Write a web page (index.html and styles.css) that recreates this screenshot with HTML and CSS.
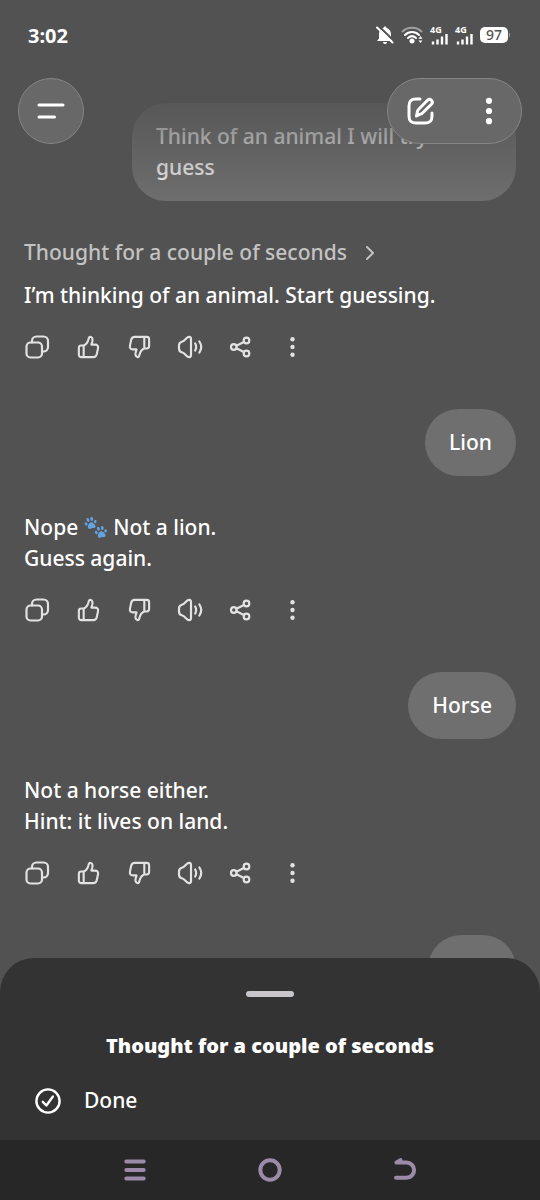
FILE: index.html
```html
<!DOCTYPE html>
<html lang="en">
<head>
<meta charset="utf-8">
<meta name="viewport" content="width=device-width, initial-scale=1">
<title>Chat</title>
<link rel="stylesheet" href="styles.css">
</head>
<body>
<svg class="defs" aria-hidden="true">
  <symbol id="copy" viewBox="0 0 26 26"><rect x="2.500" y="8.500" width="15.500" height="15" rx="4"/><path d="M8 8.500V7a4.500 4.500 0 0 1 4.500-4.500h7A4.500 4.500 0 0 1 24 7v6a4.500 4.500 0 0 1-4.500 4.500H18"/></symbol>
  <symbol id="up" viewBox="-0.500 -0.500 27 27"><path d="M8.500 23.500H6a2.500 2.500 0 0 1-2.500-2.500v-7A2.500 2.500 0 0 1 6 11.500h2.500zM8.500 11.500c2.700-1 4.200-3.200 5-6.500.4-1.900 1.100-2.700 2.300-2.400 2 .5 2.200 2.600 1.600 4.900L16.500 10.500h3.800c2.400 0 3.600 1.500 3.100 3.700l-1.300 6.300c-.5 2.100-1.600 3-3.600 3h-10"/></symbol>
  <symbol id="down" viewBox="-1.500 -0.500 27 27"><path d="M17.500 2.500H20A2.500 2.500 0 0 1 22.500 5v7a2.500 2.500 0 0 1-2.500 2.500h-2.500zM17.500 14.500c-2.700 1-4.200 3.200-5 6.500-.4 1.900-1.100 2.700-2.300 2.400-2-.5-2.200-2.600-1.600-4.900l.9-3H5.700c-2.400 0-3.600-1.500-3.100-3.700l1.300-6.300c.5-2.100 1.600-3 3.600-3h10"/></symbol>
  <symbol id="sound" viewBox="0 0 26 26"><path d="M2 11.500c0-2.400.8-3.300 2.800-3.800 2-.5 3-1.800 4.400-3.300C11.300 2.200 14 2.300 14 5v16c0 2.700-2.700 2.800-4.800.6-1.400-1.500-2.400-2.800-4.400-3.300C2.800 17.800 2 16.900 2 14.500zM18.200 9.500c1.200 2.300 1.200 4.800 0 7M22.400 7.500c2.400 3.700 2.400 7.500 0 11"/></symbol>
  <symbol id="share" viewBox="0 0 26 26"><circle cx="5.800" cy="13" r="2.800"/><circle cx="18.500" cy="6.500" r="2.800"/><circle cx="18.500" cy="19.500" r="2.800"/><path d="m8.400 11.700 7.500-3.800M8.400 14.300l7.500 3.800"/></symbol>
  <symbol id="more" viewBox="0 0 26 26"><g fill="currentColor" stroke="none"><circle cx="13.500" cy="5.200" r="2.200"/><circle cx="13.500" cy="13" r="2.200"/><circle cx="13.500" cy="20.800" r="2.200"/></g></symbol>
  <symbol id="bars" viewBox="0 0 18 12"><path d="M3 11.500V8.500M7.500 11.500V6.500M12 11.500V3.500M16.500 11.500V1" stroke-width="2.400" stroke-linecap="butt"/></symbol>
  <symbol id="pad" viewBox="0 0 14 13"><ellipse cx="1.900" cy="6.200" rx="1.400" ry="1.900" transform="rotate(-25 1.900 6.200)"/><ellipse cx="4.900" cy="2.500" rx="1.500" ry="2.200" transform="rotate(-8 4.900 2.500)"/><ellipse cx="9.100" cy="2.500" rx="1.500" ry="2.200" transform="rotate(8 9.100 2.500)"/><ellipse cx="12.100" cy="6.200" rx="1.400" ry="1.900" transform="rotate(25 12.100 6.200)"/><path d="M7 5.800c2 0 4.200 3.200 4.200 5 0 1.900-2.200 2-4.200 1.300-2 .7-4.200.6-4.200-1.300 0-1.800 2.200-5 4.200-5z"/></symbol>
</svg>

<div class="app">
  <main class="chat">
    <p class="bubble">Think of an animal I will try to guess</p>

    <section class="reply">
      <button class="thought" type="button">Thought for a couple of seconds
        <svg class="chevron" viewBox="0 0 10 16" aria-hidden="true"><path d="m2 2 6 6-6 6"/></svg>
      </button>
      <p>I’m thinking of an animal. Start guessing.</p>
      <div class="actions">
        <button type="button" aria-label="Copy"><svg><use href="#copy"/></svg></button>
        <button type="button" aria-label="Good response"><svg><use href="#up"/></svg></button>
        <button type="button" aria-label="Bad response"><svg><use href="#down"/></svg></button>
        <button type="button" aria-label="Read aloud"><svg><use href="#sound"/></svg></button>
        <button type="button" aria-label="Share"><svg><use href="#share"/></svg></button>
        <button type="button" aria-label="More"><svg><use href="#more"/></svg></button>
      </div>
    </section>

    <p class="bubble">Lion</p>

    <section class="reply">
      <p>Nope <svg class="paws" viewBox="0 0 24 22" role="img" aria-label="Paw prints"><use href="#pad" x="0" y="0" width="14" height="12" transform="rotate(-14 7 7)"/><use href="#pad" x="10" y="9" width="14" height="12" transform="rotate(-10 17 15)"/></svg> Not a lion.<br>Guess again.</p>
      <div class="actions">
        <button type="button" aria-label="Copy"><svg><use href="#copy"/></svg></button>
        <button type="button" aria-label="Good response"><svg><use href="#up"/></svg></button>
        <button type="button" aria-label="Bad response"><svg><use href="#down"/></svg></button>
        <button type="button" aria-label="Read aloud"><svg><use href="#sound"/></svg></button>
        <button type="button" aria-label="Share"><svg><use href="#share"/></svg></button>
        <button type="button" aria-label="More"><svg><use href="#more"/></svg></button>
      </div>
    </section>

    <p class="bubble">Horse</p>

    <section class="reply">
      <p>Not a horse either.<br>Hint: it lives on land.</p>
      <div class="actions">
        <button type="button" aria-label="Copy"><svg><use href="#copy"/></svg></button>
        <button type="button" aria-label="Good response"><svg><use href="#up"/></svg></button>
        <button type="button" aria-label="Bad response"><svg><use href="#down"/></svg></button>
        <button type="button" aria-label="Read aloud"><svg><use href="#sound"/></svg></button>
        <button type="button" aria-label="Share"><svg><use href="#share"/></svg></button>
        <button type="button" aria-label="More"><svg><use href="#more"/></svg></button>
      </div>
    </section>

    <div class="bubble next"></div>
  </main>

  <header class="top">
    <div class="status">
      <time>3:02</time>
      <div class="indicators">
        <svg class="bell" viewBox="0 0 18 20" aria-hidden="true"><path class="solid" d="M9 1.500c.9 0 1.500.6 1.500 1.400C13.300 3.700 15 6 15 9v4.500l2 2.500H1l2-2.500V9c0-3 1.700-5.300 4.500-6.100 0-.8.6-1.400 1.500-1.400zM7 17h4a2 2 0 0 1-4 0z"/><path class="gap" d="M2.500 1 18 16"/><path d="m1 2.500 15.500 15"/></svg>
        <svg class="wifi" viewBox="0 0 22 18" aria-hidden="true"><path class="dim" d="M1.500 5.500c5-5 14-5 19 0"/><path d="M4 9c4-4 10-4 14 0M7 12c2.500-2.300 5.500-2.300 8 0"/><circle class="solid" cx="11" cy="15" r="2.500"/><path class="solid" d="m19.500 10 2 2.800h-4zM19.500 17l2-2.600h-4z"/></svg>
        <span class="signal">4G<svg><use href="#bars"/></svg></span>
        <span class="signal">4G<svg><use href="#bars"/></svg></span>
        <span class="battery">97</span>
      </div>
    </div>
    <nav class="toolbar">
      <button class="menu" type="button" aria-label="Menu"><svg viewBox="0 0 28 18"><path d="M2 3h24M2 15h15.500"/></svg></button>
      <div class="pill">
        <button type="button" aria-label="New chat"><svg viewBox="0 0 28 28"><path d="M13 2H9C4 2 2 4 2 9v10c0 5 2 7 7 7h9c5 0 7-2 7-7v-3M9.500 19l1-4.700c.2-.9.600-1.500 1.200-2.100l8.800-8.900c1.300-1.300 2.700-1.300 3.900-.1 1.200 1.200 1.200 2.700 0 4L15.500 16c-.6.600-1.200.9-2.100 1.200z"/></svg></button>
        <button type="button" aria-label="Options"><svg class="dots" viewBox="0 0 28 28"><circle cx="15" cy="3.800" r="3.100"/><circle cx="15" cy="14" r="3.100"/><circle cx="15" cy="24.200" r="3.100"/></svg></button>
      </div>
    </nav>
  </header>

  <footer class="bottom">
    <section class="sheet">
      <div class="handle"></div>
      <h2>Thought for a couple of seconds</h2>
      <p class="step"><svg viewBox="0 0 28 28" aria-hidden="true"><circle cx="14" cy="14" r="11.600"/><path d="m8.800 14.800 3.600 3.700 6.500-9"/></svg>Done</p>
    </section>
    <nav class="system">
      <button type="button" aria-label="Recent apps"><svg viewBox="0 0 24 24"><path d="M3.300 3.500h17.400M3.300 12h17.400M3.300 20.500h17.400"/></svg></button>
      <button type="button" aria-label="Home"><svg viewBox="0 0 24 24"><circle cx="12" cy="12" r="9.700"/></svg></button>
      <button type="button" aria-label="Back"><svg viewBox="0 0 24 24"><path d="M3.500 4.500H13.500a7.600 7.600 0 0 1 0 15.200H3M3.500 4.500 7.500 2.200v2"/></svg></button>
    </nav>
  </footer>
</div>
</body>
</html>
```

FILE: styles.css
```css
* { box-sizing: border-box; }

body {
  margin: 0;
  background: #525252;
  color: #fff;
  font-family: "Noto Sans", "Open Sans", sans-serif;
  font-size: 21px;
  font-weight: 500;
  line-height: 31px;
}

p, h2 { margin: 0; }

button {
  display: flex;
  align-items: center;
  justify-content: center;
  padding: 0;
  border: 0;
  background: none;
  color: inherit;
  font: inherit;
}

svg {
  display: block;
  fill: none;
  stroke: currentColor;
  stroke-width: 2;
  stroke-linecap: round;
  stroke-linejoin: round;
}

.defs { display: none; }

.app {
  position: relative;
  height: 100vh;
  overflow: hidden;
}

/* Conversation */
.chat {
  display: flex;
  flex-direction: column;
  padding: 103px 24px 0;
}

.bubble {
  align-self: flex-end;
  max-width: 384px;
  padding: 18px 24px;
  border-radius: 34px;
  background: #6f6f6f;
}

.next { width: 88px; height: 67px; }

.reply { padding: 36px 0 49px; }

.thought {
  gap: 18px;
  margin-bottom: 12px;
  color: #c3c3c3;
}

.chevron { width: 10px; height: 16px; }

.actions {
  display: flex;
  gap: 25px;
  margin-top: 23px;
  color: #e2e2e2;
}

.actions svg { width: 26px; height: 26px; stroke-width: 2.2; }

.paws {
  display: inline-block;
  width: 24px;
  height: 22px;
  vertical-align: -4px;
  fill: #65a3e0;
  stroke: none;
}

/* Status bar and floating toolbar, fading the chat beneath */
.top {
  position: absolute;
  inset: 0 0 auto;
  height: 206px;
  background: linear-gradient(#525252 80px, #52525200);
}

.status {
  display: flex;
  align-items: center;
  justify-content: space-between;
  height: 70px;
  padding: 0 32px 0 28px;
}

.status time { font-size: 20px; font-weight: 700; }

.indicators { display: flex; align-items: center; gap: 7px; }

.bell { width: 18px; height: 20px; }
.bell .gap { stroke: #525252; }
.wifi { width: 22px; height: 18px; }
.solid { fill: currentColor; stroke: none; }
.dim { opacity: 0.45; }

.signal {
  width: 18px;
  font-size: 9px;
  font-weight: 700;
  line-height: 7px;
}

.signal svg { width: 18px; height: 12px; }

.battery {
  position: relative;
  width: 28px;
  border-radius: 5px;
  background: #fff;
  color: #525252;
  font-size: 14px;
  line-height: 16px;
  text-align: center;
}

.battery::after {
  content: "";
  position: absolute;
  top: 6px;
  right: -2px;
  width: 1px;
  height: 4px;
  background: #999;
}

.toolbar {
  display: flex;
  justify-content: space-between;
  padding: 8px 18px 0;
}

.menu, .pill {
  height: 66px;
  border: 1px solid #858585;
  border-radius: 33px;
  background: #686868;
}

.menu { width: 66px; }
.menu svg { width: 28px; height: 18px; stroke-width: 3; }

.pill { display: flex; width: 135px; }
.pill button { flex: 1; }
.pill svg { width: 28px; height: 28px; stroke-width: 3; }
.pill .dots { fill: currentColor; stroke: none; }

/* Bottom sheet and system navigation */
.bottom {
  position: absolute;
  inset: auto 0 0;
}

.sheet {
  padding: 33px 34px 24px;
  border-radius: 34px 34px 0 0;
  background: #333;
}

.handle {
  width: 48px;
  height: 6px;
  margin: 0 auto 33px;
  border-radius: 3px;
  background: #c8c6ca;
}

h2 {
  font-size: 20px;
  font-weight: 900;
  line-height: 31px;
  text-align: center;
}

.step {
  display: flex;
  align-items: center;
  gap: 22px;
  margin-top: 24px;
}

.step svg { width: 28px; height: 28px; stroke-width: 2.4; }

.system {
  display: flex;
  justify-content: center;
  height: 60px;
  background: #272727;
  color: #9b8ba8;
}

.system button { width: 25%; }
.system svg { width: 24px; height: 24px; stroke-width: 4; }
```
